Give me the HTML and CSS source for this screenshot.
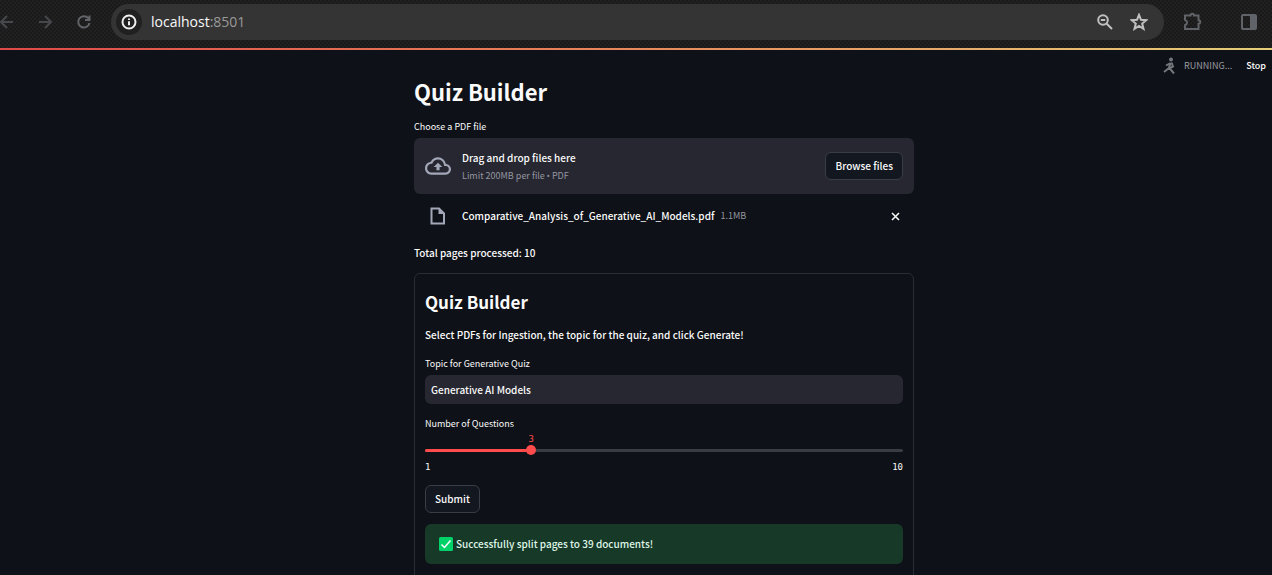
FILE: index.html
```html
<!DOCTYPE html>
<html lang="en">
<head>
<meta charset="utf-8">
<title>Quiz Builder</title>
<link rel="stylesheet" href="styles.css">
</head>
<body>
<header class="browser">
  <nav class="browser-nav" aria-label="Navigation">
    <button class="icon-btn" aria-label="Back"><svg width="16" height="16" viewBox="0 0 16 16"><path d="M13 8H1M7 2L1 8l6 6"/></svg></button>
    <button class="icon-btn" aria-label="Forward"><svg width="16" height="16" viewBox="0 0 16 16"><path d="M1 8h12M7 2l6 6-6 6"/></svg></button>
    <button class="icon-btn reload" aria-label="Reload"><svg width="16" height="16" viewBox="0 0 16 16"><path d="M13.500 9A5.700 5.700 0 1 1 12.300 4.200L14 6M13.500 1.500V6H9"/></svg></button>
  </nav>
  <div class="address">
    <button class="site-info" aria-label="Site information"><svg width="16" height="16" viewBox="0 0 16 16"><circle cx="8" cy="8" r="6.500"/><path d="M8 7.200v4M8 4.400v1.500"/></svg></button>
    <span class="url">localhost<span class="port">:8501</span></span>
    <button class="icon-btn light" aria-label="Zoom"><svg width="18" height="18" viewBox="0 0 18 18"><circle cx="7" cy="7" r="4.800"/><path d="M4.800 7h4.400M10.500 10.500L16 16"/></svg></button>
    <button class="icon-btn light star" aria-label="Bookmark"><svg width="18" height="18" viewBox="0 0 18 18"><path d="M9 1.800l2 5 5.300.4-4.100 3.400 1.300 5.200L9 13l-4.500 2.800 1.300-5.200-4.100-3.400L7 6.800z"/></svg></button>
  </div>
  <div class="browser-tools">
    <button class="icon-btn tool" aria-label="Extensions"><svg width="20" height="20" viewBox="0 0 20 20"><path d="M2 3.500h5.500c0-2.300 3.500-2.300 3.500 0H15.500v4.700c2.300 0 2.300 3.600 0 3.600V17H2v-3.800c2.800-1.400 2.800-4.200 0-5.400z"/></svg></button>
    <button class="icon-btn tool" aria-label="Side panel"><svg width="18" height="18" viewBox="0 0 18 18"><rect x="2" y="2" width="14" height="14" rx="1"/><path class="solid" d="M10 2h6v14h-6z"/></svg></button>
  </div>
</header>
<div class="decoration"></div>
<div class="status">
  <svg class="runner" width="16" height="18" viewBox="0 0 16 18"><circle cx="9" cy="2.500" r="2"/><path d="M8.500 6L7 10.500l5 6M7 11L2 15M8.500 6L4 8.500M9.500 5.500l1.500 4L5 12.500"/></svg>
  <span>RUNNING...</span>
  <button class="stop">Stop</button>
</div>
<main class="app">
  <div class="column">
    <h1>Quiz Builder</h1>
    <section class="uploader">
      <label class="label" for="browse">Choose a PDF file</label>
      <div class="dropzone">
        <svg class="cloud" width="26" height="26" viewBox="0 0 24 24"><path d="M19.350 10.040A7.490 7.490 0 0 0 12 4C9.110 4 6.600 5.640 5.350 8.040A5.994 5.994 0 0 0 0 14c0 3.310 2.690 6 6 6h13c2.760 0 5-2.240 5-5 0-2.640-2.050-4.780-4.650-4.960zM19 18H6c-2.210 0-4-1.790-4-4 0-2.050 1.530-3.760 3.560-3.970l1.070-.11.5-.95A5.469 5.469 0 0 1 12 6c2.620 0 4.880 1.860 5.390 4.430l.3 1.500 1.530.11A2.980 2.980 0 0 1 22 15c0 1.650-1.350 3-3 3zM8 13h2.550v3h2.900v-3H16l-4-4z"/></svg>
        <div class="instructions">
          <span class="text">Drag and drop files here</span>
          <small>Limit 200MB per file <span class="bullet">•</span> PDF</small>
        </div>
        <button class="btn" id="browse">Browse files</button>
      </div>
      <div class="file">
        <svg class="doc" width="17" height="18" viewBox="0 0 17 18"><path d="M2.500 1.500h7.500l5 5v10H2.500z"/><path class="fold" d="M9.500 1.500v5.500H15z"/></svg>
        <span class="text">Comparative_Analysis_of_Generative_AI_Models.pdf</span>
        <small>1.1MB</small>
        <button class="remove" aria-label="Remove file"><svg width="9" height="9" viewBox="0 0 9 9"><path d="M1 1l7 7M8 1L1 8"/></svg></button>
      </div>
    </section>
    <p class="text">Total pages processed: 10</p>
    <form class="panel">
      <h2>Quiz Builder</h2>
      <p class="text">Select PDFs for Ingestion, the topic for the quiz, and click Generate!</p>
      <div class="field">
        <label class="label" for="topic">Topic for Generative Quiz</label>
        <input class="topic text" id="topic" type="text" value="Generative AI Models">
      </div>
      <div class="field slider">
        <label class="label" for="count">Number of Questions</label>
        <div class="track">
          <output for="count" style="left: 22.22%">3</output>
          <div class="rail"><div class="fill" style="width: 22.22%"></div></div>
          <input id="count" type="range" min="1" max="10" value="3">
        </div>
        <div class="ticks"><span>1</span><span>10</span></div>
      </div>
      <button class="btn submit" type="button">Submit</button>
      <div class="alert" role="status">
        <svg width="14" height="14" viewBox="0 0 14 14"><rect width="14" height="14" rx="1.500"/><path d="M2.500 7.500l3 3 6-7"/></svg>
        <span class="text">Successfully split pages to 39 documents!</span>
      </div>
    </form>
  </div>
</main>
</body>
</html>
```
FILE: styles.css
```css
* { box-sizing: border-box; }
body {
  margin: 0;
  height: 100vh;
  display: flex;
  flex-direction: column;
  overflow: hidden;
  position: relative;
  background: #0e1117;
  color: #fafafa;
  font-family: "Noto Sans CJK SC", "Noto Sans", sans-serif;
  font-weight: 500;
}
h1, h2, p { margin: 0; }
button { font: inherit; color: inherit; cursor: pointer; }
svg { display: block; }
.browser {
  flex: none;
  height: 48px;
  padding-bottom: 4px;
  display: flex;
  align-items: center;
  background: repeating-conic-gradient(#1a1a1a 0 25%, #212121 0 50%) 0 0 / 4px 4px;
}
.browser-nav { display: flex; gap: 22px; width: 111px; }
.icon-btn { border: 0; padding: 0; background: none; }
.icon-btn svg { fill: none; stroke: #46484b; stroke-width: 2; }
.icon-btn.reload svg { stroke: #606367; }
.icon-btn.light svg { stroke: #c0c0c0; }
.address {
  flex: 1;
  height: 36px;
  margin-right: 19px;
  padding: 0 16px 0 5px;
  display: flex;
  align-items: center;
  border-radius: 18px;
  background: #343434;
}
.site-info {
  width: 26px;
  height: 26px;
  padding: 5px;
  border: 0;
  border-radius: 50%;
  background: #202020;
}
.site-info svg { fill: none; stroke: #eeeeee; stroke-width: 2; }
.url { flex: 1; padding-left: 9px; font: 14px/24px "Open Sans", sans-serif; }
.port { color: #9a9a9a; }
.star { margin-left: 16px; }
.browser-tools { display: flex; align-items: center; gap: 37px; padding-right: 14px; }
.tool svg { stroke: #606367; }
.tool .solid { fill: #606367; stroke: none; }
.decoration { flex: none; height: 2px; background: linear-gradient(90deg, #e04a4a, #e8825a 45%, #e6cf78); }
.status {
  position: absolute;
  top: 56px;
  right: 6px;
  display: flex;
  align-items: center;
  font-size: 9px;
  line-height: 20px;
  font-weight: 400;
  color: #9a9ba2;
}
.runner { margin-right: 6px; fill: #74767b; }
.runner path { fill: none; stroke: #74767b; stroke-width: 2; }
.stop { margin-left: 14px; padding: 0; border: 0; background: none; color: #fafafa; font-weight: 500; }
.app { flex: 1; overflow-y: auto; scrollbar-width: none; padding: 24px 0 0 56px; }
.column { max-width: 500px; margin: 0 auto; }
h1 { font-size: 22px; line-height: 34px; font-weight: 700; }
h2 { font-size: 17px; line-height: 28px; font-weight: 700; }
.text { font-size: 10px; line-height: 18px; }
.label { display: block; font-size: 9px; line-height: 14px; font-weight: 400; }
small { font-size: 9px; line-height: 14px; font-weight: 400; color: #9596a0; }
.bullet { font-family: "Noto Sans", sans-serif; font-size: 8px; }
.uploader { padding-top: 12px; margin-bottom: 19px; }
.dropzone {
  margin-top: 4px;
  height: 56px;
  padding: 0 11px 0 11px;
  display: flex;
  align-items: center;
  border-radius: 6px;
  background: #262730;
}
.cloud { fill: #a3a8b8; margin-right: 11px; }
.instructions { flex: 1; display: flex; flex-direction: column; gap: 2px; }
.btn {
  height: 28px;
  padding: 0 9px;
  border: 1px solid #3b3d45;
  border-radius: 6px;
  background: #131720;
  font-size: 10px;
  line-height: 18px;
}
.file { display: flex; align-items: center; padding: 13px 14px 0 15px; }
.doc { margin-right: 16px; fill: none; stroke: #a3a8b8; stroke-width: 2; }
.doc .fold { fill: #a3a8b8; stroke: none; }
.file small { flex: 1; padding-left: 6px; }
.remove { padding: 0; border: 0; background: none; }
.remove svg { fill: none; stroke: #fafafa; stroke-width: 1.500; }
.panel {
  margin-top: 11px;
  padding: 14px 10px 24px;
  border: 1px solid #2b2d34;
  border-radius: 6px;
}
.panel h2 { margin-bottom: 10px; }
.field { margin-top: 13px; }
.topic {
  display: block;
  width: 100%;
  height: 29px;
  margin-top: 4px;
  padding: 0 6px;
  border: 0;
  border-radius: 6px;
  background: #262730;
  color: #fafafa;
  font-family: inherit;
  font-weight: inherit;
}
.track { position: relative; height: 26px; padding-top: 18px; }
.track output {
  position: absolute;
  top: 2px;
  transform: translateX(-50%);
  font: 9px/12px "DejaVu Sans Mono", monospace;
  color: #ff4b4b;
}
.rail { height: 3px; border-radius: 2px; background: #3a3b44; }
.fill { height: 100%; border-radius: 2px; background: #ff4b4b; }
.track input {
  position: absolute;
  top: 14px;
  left: -5px;
  width: calc(100% + 10px);
  height: 10px;
  margin: 0;
  appearance: none;
  background: none;
}
.track input::-webkit-slider-thumb {
  appearance: none;
  width: 10px;
  height: 10px;
  border-radius: 50%;
  background: #ff4b4b;
}
.ticks { display: flex; justify-content: space-between; margin-top: 3px; font: 9px/14px "DejaVu Sans Mono", monospace; }
.submit { display: block; margin-top: 11px; }
.alert {
  margin-top: 11px;
  height: 40px;
  padding: 0 14px;
  display: flex;
  align-items: center;
  gap: 3px;
  border-radius: 6px;
  background: #173928;
  color: #dff5e6;
}
.alert rect { fill: #00d26a; }
.alert path { fill: none; stroke: #ffffff; stroke-width: 1.500; }
```
